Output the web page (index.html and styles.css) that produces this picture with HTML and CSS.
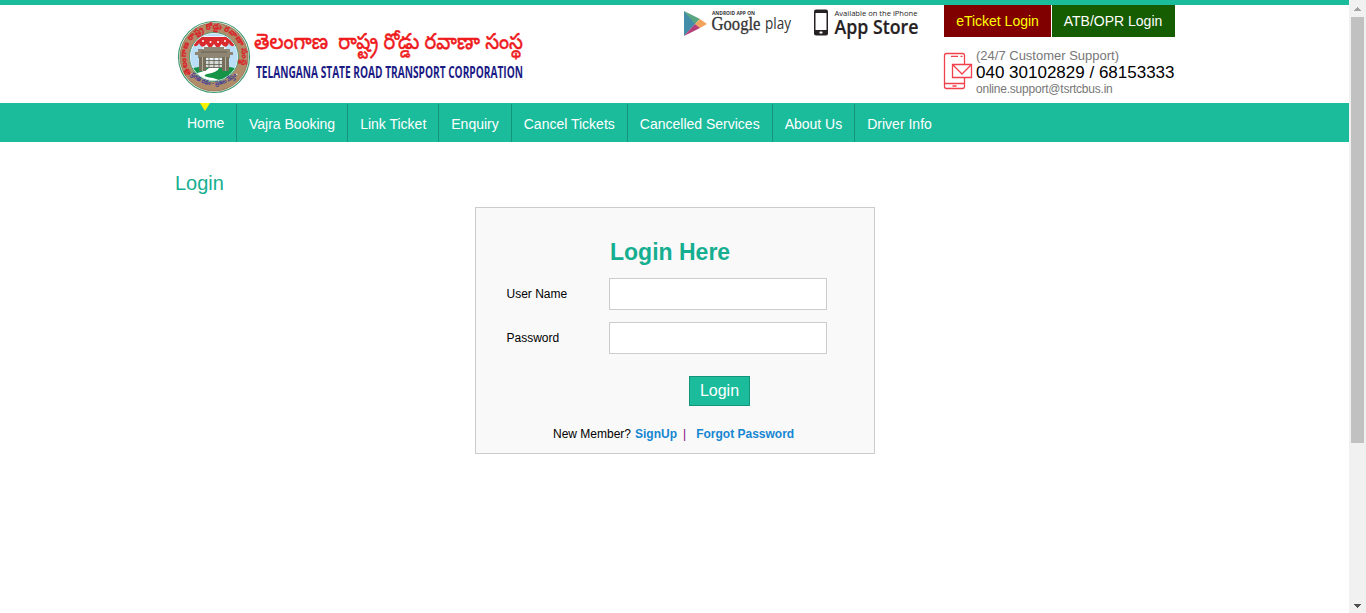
FILE: index.html
```html
<!DOCTYPE html>
<html lang="en">
<head>
<meta charset="utf-8">
<title>Login - TSRTC</title>
<link rel="stylesheet" href="styles.css">
</head>
<body>
<div class="window">
<div class="page">
<header class="header">
<div class="container header-row">
<a class="brand">
<svg width="360" height="82" viewBox="175 14 360 82">
<defs>
<path id="ring-top" d="M191.400 73.500A28 28 0 1 1 236.600 73.500"/>
<path id="ring-bottom" d="M188 71.500A31.500 31.500 0 0 0 240 71.500"/>
<clipPath id="disc"><circle cx="214" cy="57" r="23.500"/></clipPath>
</defs>
<circle cx="214" cy="57" r="35.500" fill="#fff" stroke="#3f9a70" stroke-width="1.200"/>
<circle cx="214" cy="57" r="34" fill="#b08c68" stroke="#8d6c4c" stroke-width=".8"/>
<circle cx="214" cy="57" r="24.500" fill="#fff" stroke="#4f9a78" stroke-width="1"/>
<g clip-path="url(#disc)">
<rect x="189" y="32" width="50" height="38" fill="#b9def5"/>
<path d="M204 36h20l4 30h-28z" fill="#e9f6fd"/>
<path d="M189 69q25-7 50 0v14h-50z" fill="#159447"/>
<path d="M209 68h10q-1 4-12 6-7 2 6 4l6 2-3 2-17-2q-9-3-8-6 14-2 18-6z" fill="#fff"/>
<path d="M197 37h34l5 7q-5 5-7-1-3 7-7.500 1-3.500 7-7.500 0-4 7-7.500 0-4.500 6-7.500-1-2 6-7 1z" fill="#d92b2e"/>
<g fill="#fff"><circle cx="203" cy="41" r="1"/><circle cx="210.500" cy="42" r="1"/><circle cx="218" cy="42" r="1"/><circle cx="225" cy="41" r="1"/></g>
<path d="M198 49h6v-2h20v2h6v3h3v3h-3v3h-32v-3h-3v-3h3z" fill="#8e8672"/>
<path d="M199 57h7v14h-7zM222 57h7v14h-7z" fill="#756e5d"/>
<path d="M202.500 57v14M225.500 57v14" stroke="#b5ae9c" fill="none"/>
<path d="M206 60h16v8h-16z" fill="#d5dbd6"/>
<path d="M206 60.500h16M206 64.500h16M206 67.500h16M209 58v10M214 58v10M219 58v10M201 52h26" stroke="#5e594b" stroke-width=".8" fill="none"/>
</g>
<circle cx="191.500" cy="74.500" r="1" fill="#f1dfb8"/><circle cx="236.500" cy="74.500" r="1" fill="#f1dfb8"/>
<text class="seal-red"><textPath href="#ring-top" textLength="113" lengthAdjust="spacingAndGlyphs">తెలంగాణ రాష్ట్ర రోడ్డు రవాణా సంస్థ</textPath></text>
<text class="seal-blue"><textPath href="#ring-bottom" startOffset="4" textLength="52" lengthAdjust="spacingAndGlyphs">ప్రగతి రథం - ప్రజల నేస్తం</textPath></text>
<text class="brand-te" x="254" y="49" textLength="269" lengthAdjust="spacingAndGlyphs">తెలంగాణ  రాష్ట్ర రోడ్డు రవాణా సంస్థ</text>
<text class="brand-en" x="256" y="78" textLength="267" lengthAdjust="spacingAndGlyphs">TELANGANA STATE ROAD TRANSPORT CORPORATION</text>
</svg>
</a>
<div class="stores">
<svg width="240" height="36" viewBox="683 5 240 36">
<path d="M684 11l12 12-12 13z" fill="#438da8"/>
<path d="M684 11l16 8-5 5z" fill="#5aa582"/>
<path d="M700 19l7 5-7 4-5-4z" fill="#f3a45c"/>
<path d="M684 36l11-12 5 4z" fill="#b43e77"/>
<text class="android" x="712" y="14.500" textLength="43" lengthAdjust="spacingAndGlyphs">ANDROID APP ON</text>
<text class="google" x="711.500" y="29.500" textLength="49" lengthAdjust="spacingAndGlyphs">Google</text>
<text class="play" x="765" y="29" textLength="26" lengthAdjust="spacingAndGlyphs">play</text>
<rect x="814" y="9.500" width="14" height="26" rx="2" fill="#262122"/>
<rect x="815.500" y="13" width="11" height="17" fill="#fff"/>
<rect x="819.500" y="31.500" width="3" height="2" rx=".5" fill="#fff"/>
<text class="iphone" x="834.500" y="15.500" textLength="83" lengthAdjust="spacingAndGlyphs">Available on the iPhone</text>
<text class="appstore" x="834.500" y="34" textLength="84" lengthAdjust="spacingAndGlyphs">App Store</text>
</svg>
</div>
<div class="account">
<div class="login-links"><a class="eticket">eTicket Login</a><a class="atb">ATB/OPR Login</a></div>
<div class="support">
<svg width="30" height="38" viewBox="943 52 30 38" fill="none" stroke="#f0414d" stroke-width="1.300">
<path d="M964.500 64v-8.500q0-2-2-2h-16q-2 0-2 2v31q0 2 2 2h16q2 0 2-2V78M944.500 83.500h20"/>
<path d="M951 56.300h7M960.500 56.300h2M952.500 86h4"/>
<path d="M952.500 64.500h19v13h-19zM952.500 64.500l9.500 9.500 9.500-9.500"/>
</svg>
<div class="support-text">
<div class="support-label">(24/7 Customer Support)</div>
<div class="support-phone">040 30102829 / 68153333</div>
<div class="support-mail">online.support@tsrtcbus.in</div>
</div>
</div>
</div>
</div>
</header>
<nav class="nav">
<div class="container nav-row">
<a class="home">Home</a><a>Vajra Booking</a><a>Link Ticket</a><a>Enquiry</a><a>Cancel Tickets</a><a>Cancelled Services</a><a>About Us</a><a>Driver Info</a>
</div>
</nav>
<main class="container main">
<h1>Login</h1>
<form class="card">
<h2>Login Here</h2>
<label class="field"><span>User Name</span><input type="text"></label>
<label class="field"><span>Password</span><input type="password"></label>
<button type="button" class="submit">Login</button>
<div class="links"><span>New Member?</span><a class="signup">SignUp</a><span class="sep">|</span><a>Forgot Password</a></div>
</form>
</main>
</div>
<div class="scrollbar">
<svg width="7" height="4" viewBox="0 0 7 4"><path d="M3 0h1v1h1v1h1v1h1v1H0V3h1V2h1V1h1z" fill="#a3a3a3" shape-rendering="crispEdges"/></svg>
<div class="thumb"></div>
<svg class="down" width="7" height="4" viewBox="0 0 7 4"><path d="M0 0h7v1H6v1H5v1H4v1H3V3H2V2H1V1H0z" fill="#505050" shape-rendering="crispEdges"/></svg>
</div>
</div>
</body>
</html>
```
FILE: styles.css
```css
* { box-sizing: border-box; }
body { margin: 0; font-family: "Liberation Sans", Arial, sans-serif; color: #000; background: #fff; }
.window { display: flex; height: 613px; overflow: hidden; }
.page { flex: 1; border-top: 5px solid #1abc9c; }
.container { width: 1000px; margin-left: 175px; }
.header-row { display: flex; height: 98px; }
.brand { padding-top: 9px; width: 508px; }
.brand svg, .stores svg { display: block; overflow: visible; }
.stores { width: 261px; }
.brand-te { font: 22px "Noto Sans", "Noto Sans Telugu", sans-serif; fill: #ee1a1c; stroke: #ee1a1c; stroke-width: .5px; white-space: pre; }
.brand-en { font: bold 15.500px "Open Sans", sans-serif; fill: #1b1b85; }
.seal-red { font: bold 8px "Noto Sans Telugu", sans-serif; fill: #d8262c; stroke: #d8262c; stroke-width: .3px; }
.seal-blue { font: bold 6.500px "Noto Sans Telugu", sans-serif; fill: #3a3a9c; }
.android { font: bold 5px "Open Sans", sans-serif; fill: #333; }
.google { font: 18px "Liberation Serif", serif; fill: #333; stroke: #333; stroke-width: .3px; }
.play { font: 16.500px "Open Sans", sans-serif; fill: #333; }
.iphone { font: 8px "Open Sans", sans-serif; fill: #262122; }
.appstore { font: 600 20px "Open Sans", sans-serif; fill: #262122; stroke: #262122; stroke-width: .2px; }
.account { width: 231px; }
.login-links { display: flex; gap: 1px; font-size: 14px; line-height: 32px; height: 32px; text-align: center; }
.eticket { width: 107px; background: #800000; color: #ff0; }
.atb { width: 123px; background: #165c00; color: #fff; padding-right: 1px; }
.support { display: flex; margin-left: -1px; padding-top: 10px; }
.support svg { margin-top: 5px; margin-right: 3px; flex: none; }
.support-text { white-space: nowrap; color: #777; }
.support-label { font-size: 13px; line-height: 17px; }
.support-phone { font-size: 17px; line-height: 17px; color: #000; }
.support-mail { font-size: 12px; line-height: 16px; letter-spacing: -.22px; }
.nav { background: #1abc9c; height: 39px; }
.nav-row { display: flex; height: 39px; padding-top: 1px; }
.nav-row a { padding: 0 12px; border-right: 1px solid #149479; color: #fff; font-size: 14px; line-height: 40px; white-space: nowrap; }
.nav-row a:last-child { border-right: 0; }
.nav-row .home { width: 62px; position: relative; line-height: 38px; }
.home::before { content: ""; position: absolute; left: 25px; top: -1px; border: 5px solid transparent; border-top: 8px solid #fff200; border-bottom: 0; }
.main { display: flex; flex-direction: column; padding-top: 29px; }
h1 { margin: 0; font-size: 20px; line-height: 24px; font-weight: normal; color: #16ae90; }
.card { width: 400px; height: 247px; margin: 12px 0 0 300px; border: 1px solid #ccc; background: #f9f9f9; padding: 30px 30px 0; display: flex; flex-direction: column; }
h2 { margin: 0 0 12px 104px; font-size: 23px; line-height: 28px; color: #16ae90; }
.field { display: flex; align-items: center; font-size: 12px; margin-bottom: 12px; }
.field span { width: 103px; padding-left: .5px; }
.field input { width: 218px; height: 32px; border: 1px solid #ccc; background: #fff; margin: 0; padding: 5px; }
.submit { width: 61px; height: 30px; margin: 10px 0 0 183px; padding: 0; border: 1px solid #149479; background: #1abc9c; color: #fff; font: 16px "Liberation Sans", Arial, sans-serif; }
.links { display: flex; margin: 20px 0 0 47px; font-size: 12px; line-height: 16px; white-space: nowrap; }
.links a { color: #1586d1; font-weight: bold; }
.links .signup { margin-left: 4px; }
.sep { margin: 0 10px 0 6px; color: #800080; }
.scrollbar { width: 17px; background: #f1f1f1; display: flex; flex-direction: column; align-items: center; padding: 7px 0 5px; }
.thumb { width: 13px; height: 426px; margin-top: 6px; background: #c1c1c1; }
.down { margin-top: auto; }
```
